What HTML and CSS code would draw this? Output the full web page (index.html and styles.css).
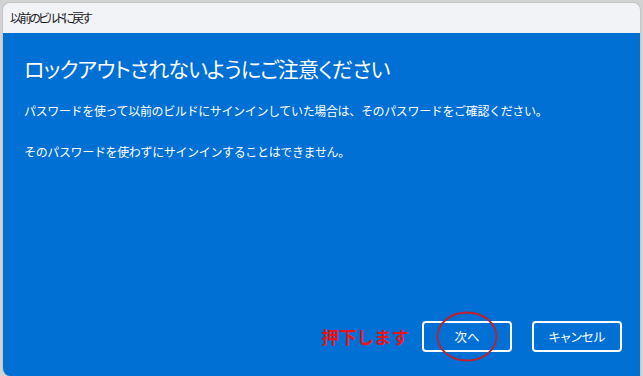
FILE: index.html
```html
<!DOCTYPE html>
<html lang="ja">
<head>
  <meta charset="UTF-8" />
  <meta name="viewport" content="width=device-width, initial-scale=1" />
  <title>以前のビルドに戻す</title>
  <link rel="stylesheet" href="styles.css">
</head>
<body>
  <div class="window">
    <div class="titlebar">以前のビルドに戻す</div>

    <div class="content">
      <h1>ロックアウトされないようにご注意ください</h1>
      <p>パスワードを使って以前のビルドにサインインしていた場合は、そのパスワードをご確認ください。</p>
      <p>そのパスワードを使わずにサインインすることはできません。</p>

      <div class="footer">
        <span class="note">押下します</span>
        <div class="btn-wrap">
          <button class="btn">次へ</button>
          <!-- 赤丸の注記 -->
          <svg class="circle" width="62" height="51" viewBox="0 0 62 51">
            <ellipse cx="31" cy="25.5" rx="29.5" ry="24" fill="none" stroke="#c41e2a" stroke-width="1.8" />
          </svg>
        </div>
        <button class="btn">キャンセル</button>
      </div>
    </div>
  </div>
</body>
</html>
```

FILE: styles.css
```css
body {
  margin: 0;
  background-color: #d2d2d2;
  font-family: "Noto Sans CJK JP", "Noto Sans", sans-serif;
  overflow: hidden;
}
.window {
  margin: 2px 0 0 2px;
  width: 639px;
  height: 374px;
  display: flex;
  flex-direction: column;
  border-radius: 8px 8px 0 8px;
  overflow: hidden;
  border: 1px solid #c4c4c4;
  border-bottom: none;
  box-sizing: border-box;
}
.titlebar {
  height: 30px;
  background-color: #f2f3f7;
  color: #1a1a1a;
  font-size: 12px;
  font-feature-settings: "palt";
  line-height: 30px;
  padding-left: 7px;
  letter-spacing: -2.4px;
}
.content {
  flex: 1;
  background-color: #0170d4;
  color: white;
  padding: 17px 0 0 21px;
  display: flex;
  flex-direction: column;
}
h1 {
  margin: 0;
  font-size: 21px;
  font-weight: normal;
  font-feature-settings: "palt";
  line-height: 36px;
  letter-spacing: -0.75px;
}
p {
  margin: 16px 0 0;
  font-size: 12px;
  line-height: 18px;
  letter-spacing: -0.35px;
}
p + p {
  margin-top: 23px;
}
.footer {
  margin-top: auto;
  display: flex;
  align-items: center;
  justify-content: flex-end;
  gap: 20px;
  padding: 0 18px 24px 0;
}
.note {
  color: #e8141c;
  font-size: 17.5px;
  font-weight: bold;
  margin-right: -7px;
}
.btn-wrap {
  position: relative;
}
.btn {
  width: 90px;
  height: 31px;
  background: transparent;
  border: 2px solid white;
  border-radius: 4px;
  color: white;
  font-family: inherit;
  font-size: 12.5px;
  font-feature-settings: "palt";
  padding: 0;
  display: block;
}
.circle {
  position: absolute;
  left: 14px;
  top: -10px;
}
```
